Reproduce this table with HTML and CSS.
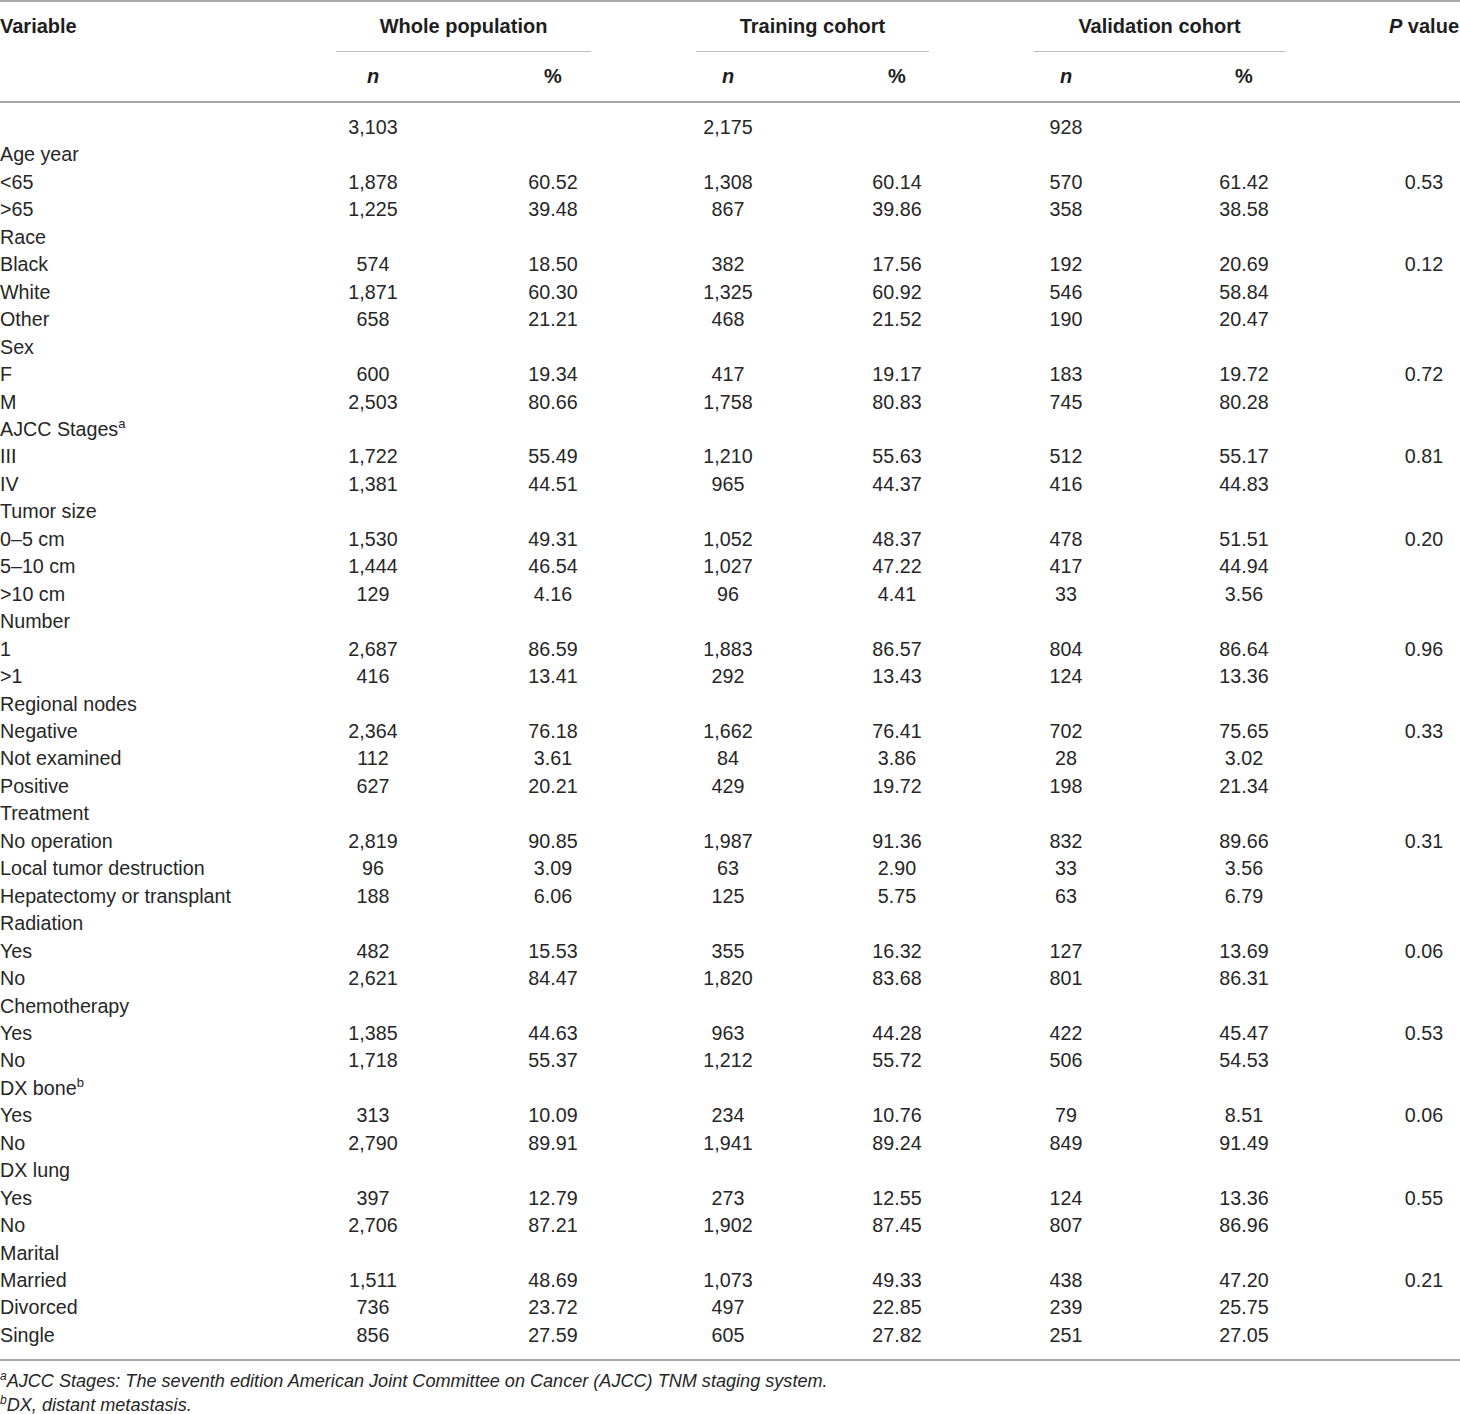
FILE: index.html
```html
<!DOCTYPE html>
<html>
<head>
<meta charset="UTF-8">
<title>Table 1</title>
<link rel="stylesheet" href="styles.css">
</head>
<body>
<div class="wrap">
<table class="tbl">
	<colgroup>
		<col class="c-var"><col class="c-n1"><col class="c-p1"><col class="c-n2"><col class="c-p2"><col class="c-n3"><col class="c-p3"><col class="c-pv">
	</colgroup>
	<thead>
		<tr class="h1">
			<th rowspan="2" class="var">Variable</th>
			<th colspan="2" class="group"><div>Whole population</div></th>
			<th colspan="2" class="group"><div>Training cohort</div></th>
			<th colspan="2" class="group"><div>Validation cohort</div></th>
			<th rowspan="2" class="pv"><i>P</i> value</th>
		</tr>
		<tr class="h2">
			<th><i>n</i></th><th>%</th>
			<th><i>n</i></th><th>%</th>
			<th><i>n</i></th><th>%</th>
		</tr>
	</thead>
	<tbody>
		<tr class="first"><td></td><td>3,103</td><td></td><td>2,175</td><td></td><td>928</td><td></td><td></td></tr>
		<tr><td>Age year</td><td></td><td></td><td></td><td></td><td></td><td></td><td></td></tr>
		<tr><td>&lt;65</td><td>1,878</td><td>60.52</td><td>1,308</td><td>60.14</td><td>570</td><td>61.42</td><td>0.53</td></tr>
		<tr><td>&gt;65</td><td>1,225</td><td>39.48</td><td>867</td><td>39.86</td><td>358</td><td>38.58</td><td></td></tr>
		<tr><td>Race</td><td></td><td></td><td></td><td></td><td></td><td></td><td></td></tr>
		<tr><td>Black</td><td>574</td><td>18.50</td><td>382</td><td>17.56</td><td>192</td><td>20.69</td><td>0.12</td></tr>
		<tr><td>White</td><td>1,871</td><td>60.30</td><td>1,325</td><td>60.92</td><td>546</td><td>58.84</td><td></td></tr>
		<tr><td>Other</td><td>658</td><td>21.21</td><td>468</td><td>21.52</td><td>190</td><td>20.47</td><td></td></tr>
		<tr><td>Sex</td><td></td><td></td><td></td><td></td><td></td><td></td><td></td></tr>
		<tr><td>F</td><td>600</td><td>19.34</td><td>417</td><td>19.17</td><td>183</td><td>19.72</td><td>0.72</td></tr>
		<tr><td>M</td><td>2,503</td><td>80.66</td><td>1,758</td><td>80.83</td><td>745</td><td>80.28</td><td></td></tr>
		<tr><td>AJCC Stages<sup>a</sup></td><td></td><td></td><td></td><td></td><td></td><td></td><td></td></tr>
		<tr><td>III</td><td>1,722</td><td>55.49</td><td>1,210</td><td>55.63</td><td>512</td><td>55.17</td><td>0.81</td></tr>
		<tr><td>IV</td><td>1,381</td><td>44.51</td><td>965</td><td>44.37</td><td>416</td><td>44.83</td><td></td></tr>
		<tr><td>Tumor size</td><td></td><td></td><td></td><td></td><td></td><td></td><td></td></tr>
		<tr><td>0–5 cm</td><td>1,530</td><td>49.31</td><td>1,052</td><td>48.37</td><td>478</td><td>51.51</td><td>0.20</td></tr>
		<tr><td>5–10 cm</td><td>1,444</td><td>46.54</td><td>1,027</td><td>47.22</td><td>417</td><td>44.94</td><td></td></tr>
		<tr><td>&gt;10 cm</td><td>129</td><td>4.16</td><td>96</td><td>4.41</td><td>33</td><td>3.56</td><td></td></tr>
		<tr><td>Number</td><td></td><td></td><td></td><td></td><td></td><td></td><td></td></tr>
		<tr><td>1</td><td>2,687</td><td>86.59</td><td>1,883</td><td>86.57</td><td>804</td><td>86.64</td><td>0.96</td></tr>
		<tr><td>&gt;1</td><td>416</td><td>13.41</td><td>292</td><td>13.43</td><td>124</td><td>13.36</td><td></td></tr>
		<tr><td>Regional nodes</td><td></td><td></td><td></td><td></td><td></td><td></td><td></td></tr>
		<tr><td>Negative</td><td>2,364</td><td>76.18</td><td>1,662</td><td>76.41</td><td>702</td><td>75.65</td><td>0.33</td></tr>
		<tr><td>Not examined</td><td>112</td><td>3.61</td><td>84</td><td>3.86</td><td>28</td><td>3.02</td><td></td></tr>
		<tr><td>Positive</td><td>627</td><td>20.21</td><td>429</td><td>19.72</td><td>198</td><td>21.34</td><td></td></tr>
		<tr><td>Treatment</td><td></td><td></td><td></td><td></td><td></td><td></td><td></td></tr>
		<tr><td>No operation</td><td>2,819</td><td>90.85</td><td>1,987</td><td>91.36</td><td>832</td><td>89.66</td><td>0.31</td></tr>
		<tr><td>Local tumor destruction</td><td>96</td><td>3.09</td><td>63</td><td>2.90</td><td>33</td><td>3.56</td><td></td></tr>
		<tr><td>Hepatectomy or transplant</td><td>188</td><td>6.06</td><td>125</td><td>5.75</td><td>63</td><td>6.79</td><td></td></tr>
		<tr><td>Radiation</td><td></td><td></td><td></td><td></td><td></td><td></td><td></td></tr>
		<tr><td>Yes</td><td>482</td><td>15.53</td><td>355</td><td>16.32</td><td>127</td><td>13.69</td><td>0.06</td></tr>
		<tr><td>No</td><td>2,621</td><td>84.47</td><td>1,820</td><td>83.68</td><td>801</td><td>86.31</td><td></td></tr>
		<tr><td>Chemotherapy</td><td></td><td></td><td></td><td></td><td></td><td></td><td></td></tr>
		<tr><td>Yes</td><td>1,385</td><td>44.63</td><td>963</td><td>44.28</td><td>422</td><td>45.47</td><td>0.53</td></tr>
		<tr><td>No</td><td>1,718</td><td>55.37</td><td>1,212</td><td>55.72</td><td>506</td><td>54.53</td><td></td></tr>
		<tr><td>DX bone<sup>b</sup></td><td></td><td></td><td></td><td></td><td></td><td></td><td></td></tr>
		<tr><td>Yes</td><td>313</td><td>10.09</td><td>234</td><td>10.76</td><td>79</td><td>8.51</td><td>0.06</td></tr>
		<tr><td>No</td><td>2,790</td><td>89.91</td><td>1,941</td><td>89.24</td><td>849</td><td>91.49</td><td></td></tr>
		<tr><td>DX lung</td><td></td><td></td><td></td><td></td><td></td><td></td><td></td></tr>
		<tr><td>Yes</td><td>397</td><td>12.79</td><td>273</td><td>12.55</td><td>124</td><td>13.36</td><td>0.55</td></tr>
		<tr><td>No</td><td>2,706</td><td>87.21</td><td>1,902</td><td>87.45</td><td>807</td><td>86.96</td><td></td></tr>
		<tr><td>Marital</td><td></td><td></td><td></td><td></td><td></td><td></td><td></td></tr>
		<tr><td>Married</td><td>1,511</td><td>48.69</td><td>1,073</td><td>49.33</td><td>438</td><td>47.20</td><td>0.21</td></tr>
		<tr><td>Divorced</td><td>736</td><td>23.72</td><td>497</td><td>22.85</td><td>239</td><td>25.75</td><td></td></tr>
		<tr class="last"><td>Single</td><td>856</td><td>27.59</td><td>605</td><td>27.82</td><td>251</td><td>27.05</td><td></td></tr>
	</tbody>
</table>
<div class="notes">
	<p><sup>a</sup>AJCC Stages: The seventh edition American Joint Committee on Cancer (AJCC) TNM staging system.</p>
	<p><sup>b</sup>DX, distant metastasis.</p>
</div>
</div>
</body>
</html>
```

FILE: styles.css
```css
*{margin: 0;padding: 0;}
body{
	background: #fff;
	color: #262626;
	font-family: "Liberation Sans", Arial, sans-serif;
}
.wrap{
	width: 1460px;
}
.tbl{
	width: 1460px;
	table-layout: fixed;
	border-collapse: collapse;
	border-top: 2px solid #a9a9a9;
	border-bottom: 2px solid #a9a9a9;
}
.c-var{width: 283px;}
.c-n1{width: 180px;}
.c-p1{width: 180px;}
.c-n2{width: 170px;}
.c-p2{width: 168px;}
.c-n3{width: 170px;}
.c-p3{width: 186px;}
.c-pv{width: 123px;}

.tbl th{
	font-size: 20px;
	font-weight: bold;
	color: #1e1e1e;
	text-align: center;
	line-height: 49px;
	padding: 0;
}
.tbl thead{
	border-bottom: 2px solid #a9a9a9;
}
.tbl th.var{
	text-align: left;
	vertical-align: top;
}
.tbl th.pv{
	vertical-align: top;
	padding-left: 51px;
}
.tbl th.group{
	padding: 0 52px 0 53px;
}
.tbl th.group div{
	border-bottom: 1px solid #bdbdbd;
}

.tbl td{
	font-size: 19.7px;
	line-height: 27.45px;
	text-align: center;
	padding: 0;
	white-space: nowrap;
}
.tbl td:first-child{
	text-align: left;
}
.tbl td:last-child{
	padding-left: 51px;
}
.tbl tr.first td{
	padding-top: 11px;
}
.tbl tr.last td{
	padding-bottom: 10px;
}
.tbl sup{
	font-size: 13px;
	line-height: 0;
	vertical-align: 8px;
}

.notes{
	padding-top: 8px;
	font-size: 18.1px;
	font-style: italic;
	line-height: 24px;
	color: #262626;
}
.notes sup{
	font-size: 12px;
	line-height: 0;
	vertical-align: 7px;
}
```
